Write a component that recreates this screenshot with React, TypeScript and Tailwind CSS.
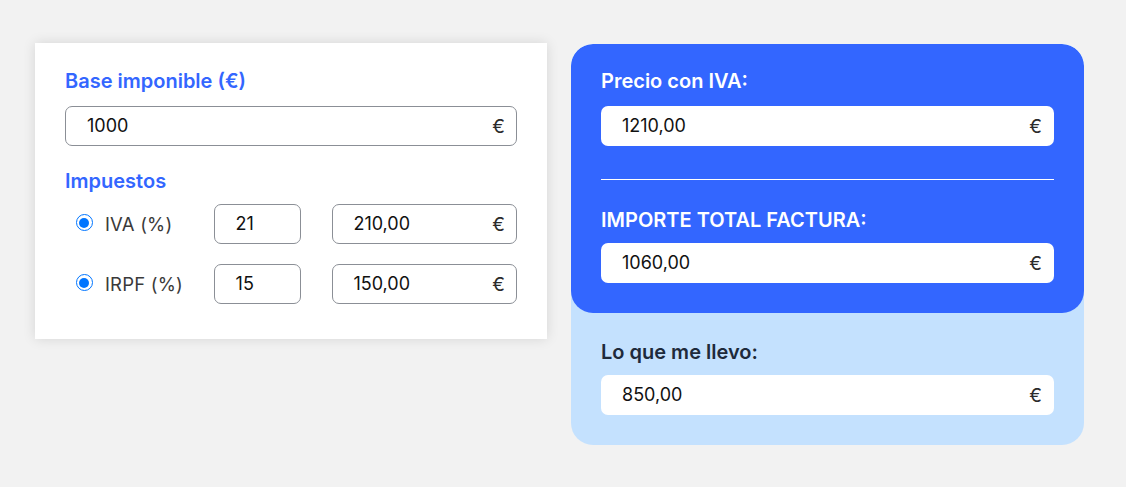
import React from "react";

const font = { fontFamily: "Inter, 'Noto Sans', sans-serif" };

function Euro() {
  return <span className="text-[19px] text-[#2b2b2b] leading-none">€</span>;
}

function BorderInput({ value, euro, className }: { value: string; euro?: boolean; className: string }) {
  return (
    <div
      className={`h-[40px] flex items-center justify-between border border-[#8b8f96] rounded-[7px] bg-white ${className}`}
    >
      <span className="text-[18px] text-[#111] leading-none">{value}</span>
      {euro && <Euro />}
    </div>
  );
}

function WhiteInput({ value }: { value: string }) {
  return (
    <div className="h-[40px] flex items-center justify-between bg-white rounded-[7px] pl-[21px] pr-[12px]">
      <span className="text-[18px] text-[#111] leading-none">{value}</span>
      <Euro />
    </div>
  );
}

function Radio() {
  return (
    <div className="w-[17px] h-[17px] rounded-full border-[1.5px] border-[#0075ff] bg-white flex items-center justify-center">
      <div className="w-[10px] h-[10px] rounded-full bg-[#0075ff]" />
    </div>
  );
}

function TaxRow({ label, pct, amount }: { label: string; pct: string; amount: string }) {
  return (
    <div className="flex items-center h-[40px]">
      <div className="w-[40px] flex items-center justify-center pr-[1px] -mt-[3px]">
        <Radio />
      </div>
      <span className="w-[109px] text-[18.5px] text-[#3a3a3a] leading-none tracking-[0.2px]">{label}</span>
      <BorderInput value={pct} className="w-[88px] pl-[21px] pr-[10px]" />
      <BorderInput value={amount} euro className="ml-[31px] w-[185px] pl-[20px] pr-[11px]" />
    </div>
  );
}

export default function App() {
  return (
    <div className="min-h-[487px] w-full bg-[#f2f2f2] pl-[35px] pt-[43px]" style={font}>
      <div className="flex items-start gap-[24px]">
        <div className="w-[512px] bg-white shadow-[0_0_12px_rgba(0,0,0,0.12)] px-[30px] pt-[24px] pb-[35px]">
          <div className="text-[20px] font-semibold text-[#3366ff] leading-[28px]">Base imponible (€)</div>
          <BorderInput value="1000" euro className="mt-[11px] w-full pl-[21px] pr-[11px]" />
          <div className="mt-[21px] text-[20px] font-semibold text-[#3366ff] leading-[28px]">Impuestos</div>
          <div className="mt-[9px] flex flex-col gap-[20px]">
            <TaxRow label="IVA (%)" pct="21" amount="210,00" />
            <TaxRow label="IRPF (%)" pct="15" amount="150,00" />
          </div>
        </div>

        <div className="mt-[1px] w-[513px] bg-[#c4e1fe] rounded-[22px] overflow-hidden">
          <div className="bg-[#3366ff] rounded-[22px] px-[30px] pt-[23px] pb-[30px]">
            <div className="text-[20px] font-semibold text-white leading-[28px]">Precio con IVA:</div>
            <div className="mt-[11px]">
              <WhiteInput value="1210,00" />
            </div>
            <div className="mt-[33px] h-px bg-white" />
            <div className="mt-[26px] text-[20px] font-semibold text-white leading-[28px]">IMPORTE TOTAL FACTURA:</div>
            <div className="mt-[9px]">
              <WhiteInput value="1060,00" />
            </div>
          </div>
          <div className="px-[30px] pt-[25px] pb-[30px]">
            <div className="text-[20px] font-semibold text-[#1e2a3b] leading-[28px]">Lo que me llevo:</div>
            <div className="mt-[9px]">
              <WhiteInput value="850,00" />
            </div>
          </div>
        </div>
      </div>
    </div>
  );
}
